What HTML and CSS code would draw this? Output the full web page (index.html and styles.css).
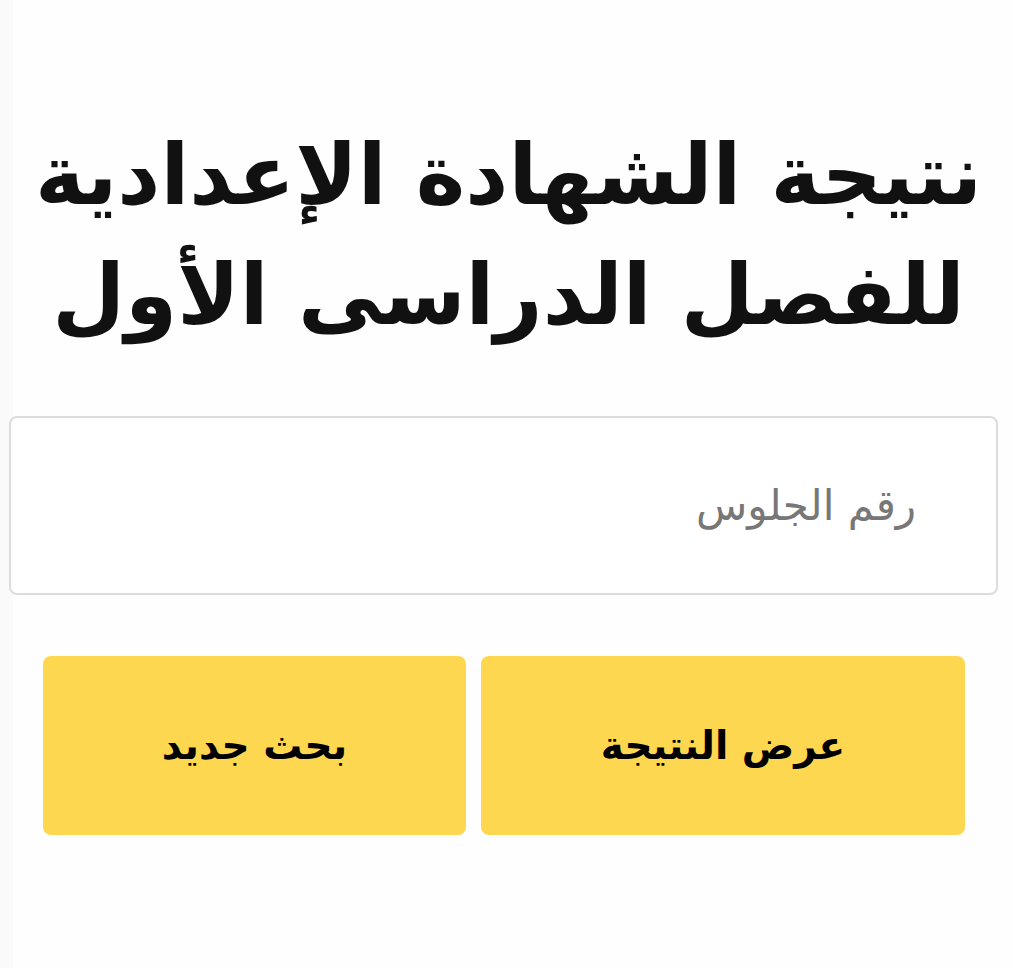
FILE: index.html
```
<!DOCTYPE html>
<html lang="ar" dir="rtl">
<head>
  <meta charset="UTF-8">
  <title>نتيجة الشهادة الإعدادية</title>
  <link rel="stylesheet" href="styles.css">
</head>
<body>
  <div class="page">
    <h1 class="title">نتيجة الشهادة الإعدادية<br>للفصل الدراسى الأول</h1>

    <input type="text" class="seat-input" placeholder="رقم الجلوس" />

    <div class="actions">
      <button class="btn btn-show">عرض النتيجة</button>
      <button class="btn btn-new">بحث جديد</button>
    </div>
  </div>
</body>
</html>
```

FILE: styles.css
```
body {
  margin: 0;
  padding: 0;
  font-family: "DejaVu Sans", sans-serif;
  background: linear-gradient(to right, #fafafa 13px, #fefefe 13px);
  min-height: 968px;
}

.page {
  padding-top: 115px;
}

.title {
  margin: 0;
  padding-left: 4px;
  font-size: 84px;
  line-height: 120px;
  font-weight: bold;
  color: #111;
  text-align: center;
}

.seat-input {
  display: block;
  box-sizing: border-box;
  width: 989px;
  height: 179px;
  margin: 61px 15px 0 9px;
  padding: 0 80px 0 20px;
  border: 2px solid #dcdcdc;
  border-radius: 8px;
  background: #fff;
  font-family: "DejaVu Sans", sans-serif;
  font-size: 42px;
  color: #333;
}

.seat-input::placeholder {
  color: #777;
}

.actions {
  display: grid;
  grid-template-columns: 484px 423px;
  gap: 15px;
  margin: 61px 48px 0 43px;
}

.btn {
  height: 179px;
  border: none;
  border-radius: 8px;
  background-color: #fdd74f;
  font-family: "DejaVu Sans", sans-serif;
  font-size: 39px;
  font-weight: bold;
  color: #000;
  cursor: pointer;
}
```
